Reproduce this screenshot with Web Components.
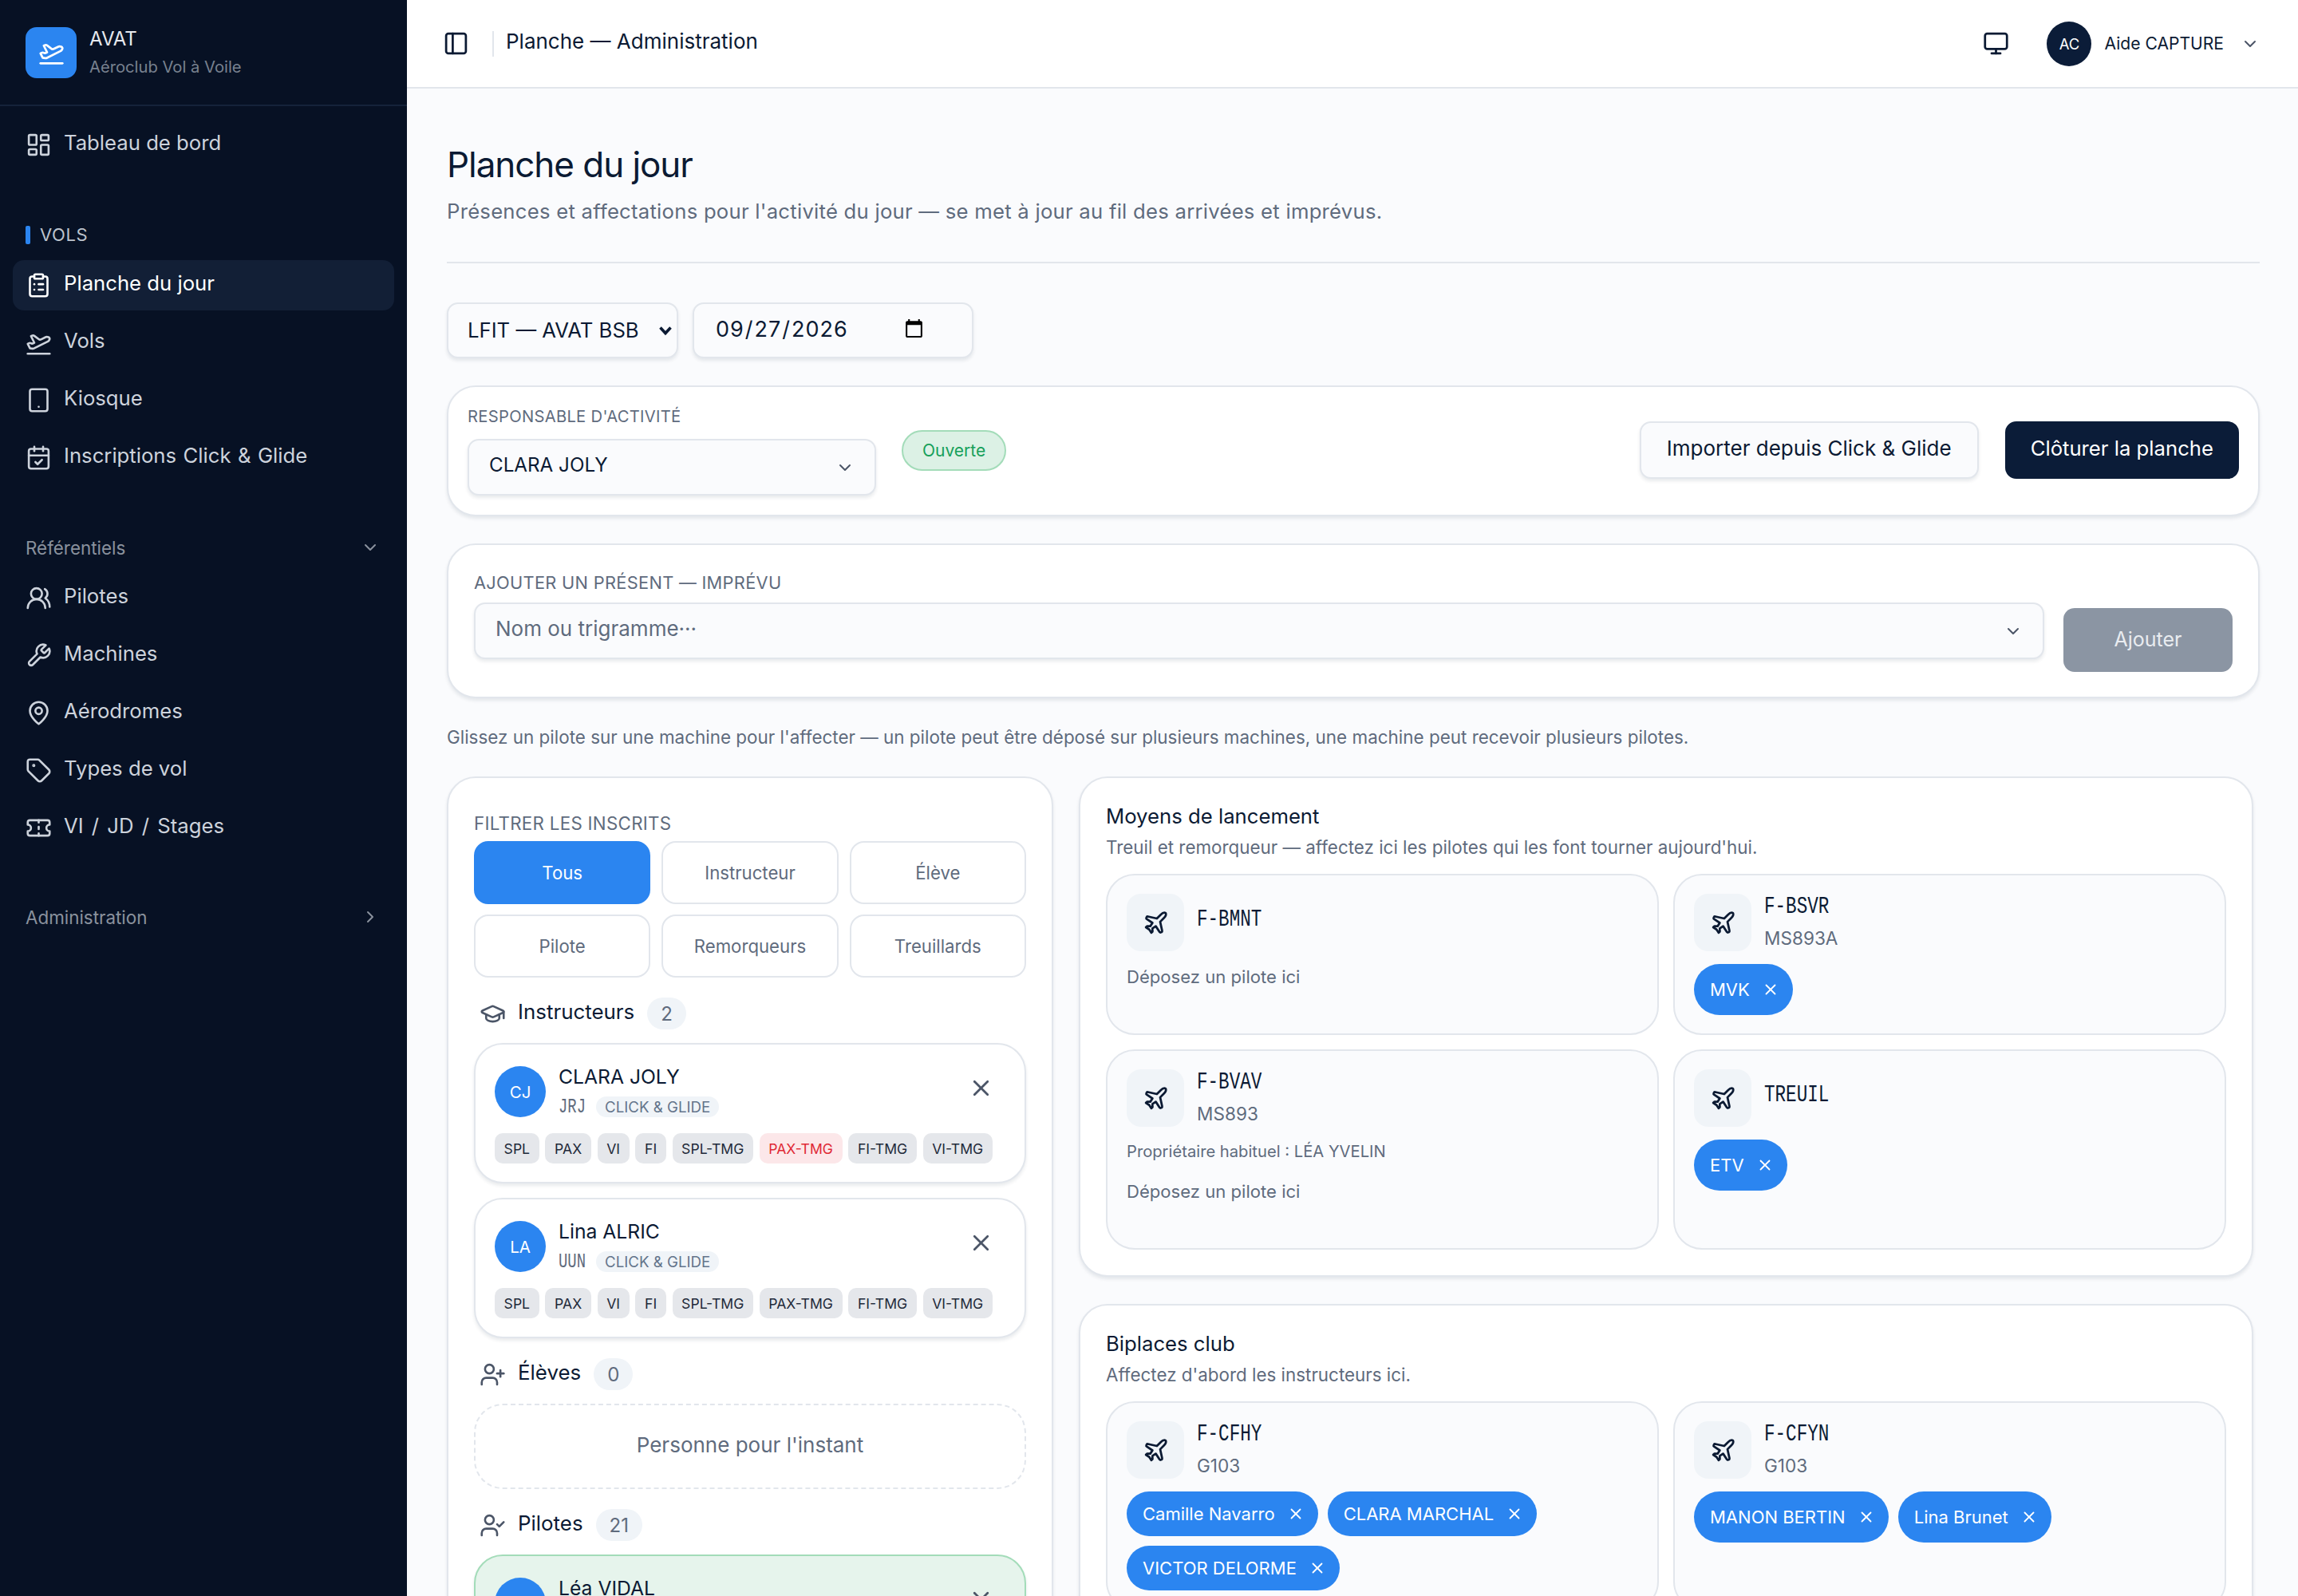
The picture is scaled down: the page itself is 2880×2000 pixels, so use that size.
<!DOCTYPE html>
<html lang="fr">
<head>
<meta charset="utf-8">
<title>AVAT - Planche du jour</title>
<style>
  html, body { margin: 0; height: 2000px; overflow: hidden; }
  body {
    font-family: Inter, "Liberation Sans", sans-serif;
    color: #0b1a33;
    background: #fafbfd;
    --mono: "Liberation Mono", "DejaVu Sans Mono", monospace;
    --blue: #2b85f0;
    --navy: #0b1c38;
    --line: #e2e6ec;
    --muted: #5f6b7d;
    --shadow: 0 3px 4px rgba(15, 30, 60, .09);
  }
  .shell { display: flex; height: 2000px; overflow: hidden; }
  .main { flex: 1; min-width: 0; display: flex; flex-direction: column; }
  .main > * { flex: none; }
  .content { padding: 0 48px 0 50px; display: flex; flex-direction: column; }
  .content > * { flex: none; }
</style>
</head>
<body>
<div class="shell">
  <av-sidebar>
    <av-nav-item icon="dashboard">Tableau de bord</av-nav-item>
    <av-nav-heading>VOLS</av-nav-heading>
    <av-nav-item icon="clipboard" active>Planche du jour</av-nav-item>
    <av-nav-item icon="takeoff">Vols</av-nav-item>
    <av-nav-item icon="tablet">Kiosque</av-nav-item>
    <av-nav-item icon="calendar" style="word-spacing: 1.2px">Inscriptions Click &amp; Glide</av-nav-item>
    <av-nav-fold open>Référentiels</av-nav-fold>
    <av-nav-item icon="users">Pilotes</av-nav-item>
    <av-nav-item icon="wrench">Machines</av-nav-item>
    <av-nav-item icon="pin">Aérodromes</av-nav-item>
    <av-nav-item icon="tag">Types de vol</av-nav-item>
    <av-nav-item icon="ticket" style="word-spacing: 3px">VI / JD / Stages</av-nav-item>
    <av-nav-fold class="last">Administration</av-nav-fold>
  </av-sidebar>

  <div class="main">
    <av-topbar></av-topbar>
    <div class="content">
      <av-page-head></av-page-head>
      <av-filters></av-filters>
      <av-responsable></av-responsable>
      <av-add-present></av-add-present>
      <av-hint>Glissez un pilote sur une machine pour l'affecter — un pilote peut être déposé sur plusieurs machines, une machine peut recevoir plusieurs pilotes.</av-hint>
      <av-board>
        <av-inscrits slot="left">
          <av-section icon="cap" count="2">Instructeurs</av-section>
          <av-pilot initials="CJ" name="CLARA JOLY" tri="JRJ" source="CLICK &amp; GLIDE" warn="PAX-TMG"></av-pilot>
          <av-pilot initials="LA" name="Lina ALRIC" tri="UUN" source="CLICK &amp; GLIDE"></av-pilot>
          <av-section icon="userplus" count="0">Élèves</av-section>
          <av-empty>Personne pour l'instant</av-empty>
          <av-section icon="usercheck" count="21">Pilotes</av-section>
          <av-pilot present initials="LV" name="Léa VIDAL"></av-pilot>
        </av-inscrits>

        <av-fleet title="Moyens de lancement" sub="Treuil et remorqueur — affectez ici les pilotes qui les font tourner aujourd'hui.">
          <av-tile reg="F-BMNT"><av-drop>Déposez un pilote ici</av-drop></av-tile>
          <av-tile reg="F-BSVR" model="MS893A"><av-chip>MVK</av-chip></av-tile>
          <av-tile reg="F-BVAV" model="MS893">
            <av-owner>Propriétaire habituel : LÉA YVELIN</av-owner>
            <av-drop>Déposez un pilote ici</av-drop>
          </av-tile>
          <av-tile reg="TREUIL"><av-chip>ETV</av-chip></av-tile>
        </av-fleet>

        <av-fleet title="Biplaces club" sub="Affectez d'abord les instructeurs ici.">
          <av-tile reg="F-CFHY" model="G103">
            <av-chip compact>Camille Navarro</av-chip>
            <av-chip compact>CLARA MARCHAL</av-chip>
            <av-chip compact>VICTOR DELORME</av-chip>
          </av-tile>
          <av-tile reg="F-CFYN" model="G103">
            <av-chip>MANON BERTIN</av-chip>
            <av-chip>Lina Brunet</av-chip>
          </av-tile>
        </av-fleet>
      </av-board>
    </div>
  </div>
</div>

<script>
// lucide-style icon bodies, all on a 24 unit grid
const ICONS = {
  takeoff: '<path d="M2 22h20"/><path d="M6.36 17.4 4 17l-2-4 1.1-.55a2 2 0 0 1 1.8 0l.17.1a2 2 0 0 0 1.8 0L8 12 5 6l.9-.45a2 2 0 0 1 2.09.2l4.02 3a2 2 0 0 0 2.1.2l4.19-2.06a2.41 2.41 0 0 1 1.73-.17L21 7a1.4 1.4 0 0 1 .87 1.99l-.38.76c-.23.46-.6.84-1.07 1.08L7.58 17.2a2 2 0 0 1-1.22.18Z"/>',
  dashboard: '<rect x="3" y="3" width="7" height="9" rx="1"/><rect x="14" y="3" width="7" height="5" rx="1"/><rect x="14" y="12" width="7" height="9" rx="1"/><rect x="3" y="16" width="7" height="5" rx="1"/>',
  clipboard: '<rect x="8" y="2" width="8" height="4" rx="1"/><path d="M16 4h2a2 2 0 0 1 2 2v14a2 2 0 0 1-2 2H6a2 2 0 0 1-2-2V6a2 2 0 0 1 2-2h2"/><path d="M12 11h4"/><path d="M12 16h4"/><path d="M8 11h.01"/><path d="M8 16h.01"/>',
  tablet: '<rect x="4" y="2" width="16" height="20" rx="2"/><path d="M12 18h.01"/>',
  calendar: '<path d="M8 2v4"/><path d="M16 2v4"/><rect x="3" y="4" width="18" height="18" rx="2"/><path d="M3 10h18"/><path d="m9 16 2 2 4-4"/>',
  users: '<path d="M18 21a8 8 0 0 0-16 0"/><circle cx="10" cy="8" r="5"/><path d="M22 20c0-3.37-2-6.5-4-8a5 5 0 0 0-.45-8.3"/>',
  wrench: '<path d="M14.7 6.3a1 1 0 0 0 0 1.4l1.6 1.6a1 1 0 0 0 1.4 0l3.77-3.77a6 6 0 0 1-7.94 7.94l-6.91 6.91a2.12 2.12 0 0 1-3-3l6.91-6.91a6 6 0 0 1 7.94-7.94l-3.76 3.76z"/>',
  pin: '<path d="M20 10c0 6-8 12-8 12s-8-6-8-12a8 8 0 0 1 16 0Z"/><circle cx="12" cy="10" r="3"/>',
  tag: '<path d="M12.586 2.586A2 2 0 0 0 11.172 2H4a2 2 0 0 0-2 2v7.172a2 2 0 0 0 .586 1.414l8.704 8.704a2.426 2.426 0 0 0 3.42 0l6.58-6.58a2.426 2.426 0 0 0 0-3.42z"/><circle cx="7.5" cy="7.5" r=".5" fill="currentColor"/>',
  ticket: '<path d="M2 9a3 3 0 0 1 0 6v2a2 2 0 0 0 2 2h16a2 2 0 0 0 2-2v-2a3 3 0 0 1 0-6V7a2 2 0 0 0-2-2H4a2 2 0 0 0-2 2Z"/><path d="M12 5v2"/><path d="M12 17v2"/><path d="M12 11v2"/>',
  down: '<path d="m6 9 6 6 6-6"/>',
  right: '<path d="m9 18 6-6-6-6"/>',
  panel: '<rect x="3" y="3" width="18" height="18" rx="2"/><path d="M9 3v18"/>',
  monitor: '<rect x="2" y="3" width="20" height="14" rx="2"/><path d="M8 21h8"/><path d="M12 17v4"/>',
  cap: '<path d="M21.42 10.922a1 1 0 0 0-.019-1.838L12.83 5.18a2 2 0 0 0-1.66 0L2.6 9.08a1 1 0 0 0 0 1.832l8.57 3.908a2 2 0 0 0 1.66 0z"/><path d="M22 10v6"/><path d="M6 12.5V16a6 3 0 0 0 12 0v-3.5"/>',
  userplus: '<path d="M16 21v-2a4 4 0 0 0-4-4H6a4 4 0 0 0-4 4v2"/><circle cx="9" cy="7" r="4"/><path d="M19 8v6"/><path d="M22 11h-6"/>',
  usercheck: '<path d="M16 21v-2a4 4 0 0 0-4-4H6a4 4 0 0 0-4 4v2"/><circle cx="9" cy="7" r="4"/><path d="m16 11 2 2 4-4"/>',
  plane: '<path d="M17.8 19.2 16 11l3.5-3.5C21 6 21.5 4 21 3c-1-.5-3 0-4.5 1.5L13 8 4.8 6.2c-.5-.1-.9.1-1.1.5l-.3.5c-.2.5-.1 1 .3 1.3L9 12l-2 3H4l-1 1 3 2 2 3 1-1v-3l3-2 3.5 5.3c.3.4.8.5 1.3.3l.5-.2c.4-.3.6-.7.5-1.2z"/>',
  x: '<path d="M18 6 6 18"/><path d="m6 6 12 12"/>'
};

const icon = (name, size = 33, stroke = 2) =>
  `<svg width="${size}" height="${size}" viewBox="0 0 24 24" fill="none" stroke="currentColor" stroke-width="${stroke}" stroke-linecap="round" stroke-linejoin="round" style="display:block;flex:none" aria-hidden="true">${ICONS[name]}</svg>`;

/* Everything below just renders a style + markup pair into an open shadow root */
class AvElement extends HTMLElement {
  connectedCallback() {
    if (!this.shadowRoot) this.attachShadow({ mode: 'open' });
    this.shadowRoot.innerHTML = this.render();
  }
  attr(name, fallback = '') {
    return this.getAttribute(name) ?? fallback;
  }
}

const define = (tag, render) => {
  customElements.define(tag, class extends AvElement {
    render() { return render(this); }
  });
};

/* ---------- sidebar ---------- */

define('av-sidebar', () => `
  <style>
    :host { display: block; flex: none; width: 510px; height: 2000px; background: #071124; }
    .brand { display: flex; align-items: center; gap: 16px; height: 133px; padding: 0 32px; box-sizing: border-box;
      border-bottom: 2px solid #15233a; }
    .logo { width: 64px; height: 64px; border-radius: 14px; background: var(--blue); color: #fff;
      display: flex; align-items: center; justify-content: center; flex: none; }
    .name { font-size: 24px; line-height: 36px; color: #e6e9ee; }
    .club { font-size: 20.2px; line-height: 34px; color: #78818f; }
    nav { display: flex; flex-direction: column; padding: 8px 16px 0; }
  </style>
  <div class="brand">
    <div class="logo">${icon('takeoff', 33)}</div>
    <div><div class="name">AVAT</div><div class="club">Aéroclub Vol à Voile</div></div>
  </div>
  <nav><slot></slot></nav>
`);

define('av-nav-item', (el) => `
  <style>
    :host { display: block; height: 63px; margin-top: 9px; border-radius: 14px; color: #cdd3dc;
      ${el.hasAttribute('active') ? 'background: #121f36; color: #fff;' : ''} }
    .row { display: flex; align-items: center; gap: 15px; height: 63px; padding: 0 16px; font-size: 25.7px; }
    .label { position: relative; top: -3px; }
  </style>
  <div class="row">${icon(el.attr('icon'), 33, 1.9)}<span class="label"><slot></slot></span></div>
`);

define('av-nav-heading', () => `
  <style>
    :host { display: flex; align-items: center; gap: 12px; margin: 69px 0 11px 16px; height: 24px; color: #bcc3cd; font-size: 22px; letter-spacing: .6px; }
    i { width: 6px; height: 23px; background: var(--blue); border-radius: 2px; }
  </style>
  <i></i><span><slot></slot></span>
`);

define('av-nav-fold', (el) => `
  <style>
    :host { display: flex; align-items: center; justify-content: space-between; height: 28px; margin: 67px 18px 9px 16px;
      color: #8a919d; font-size: 22.4px; }
    :host(.last) { margin-top: 66px; }
  </style>
  <span><slot></slot></span>${icon(el.hasAttribute('open') ? 'down' : 'right', 24, 2)}
`);

/* ---------- top bar ---------- */

define('av-topbar', () => `
  <style>
    :host { display: flex; align-items: center; height: 111px; box-sizing: border-box; padding: 0 48px 0 45px;
      background: #fff; border-bottom: 2px solid var(--line); }
    .sep { width: 2px; height: 32px; background: var(--line); margin: 0 15px 0 29px; }
    .title { font-size: 26px; position: relative; top: -3px; }
    .grow { flex: 1; }
    .av { width: 56px; height: 56px; border-radius: 50%; background: var(--navy); color: #fff; font-size: 18.5px;
      display: flex; align-items: center; justify-content: center; margin: 0 16px 0 47px; flex: none; }
    .who { font-size: 21.1px; margin-right: 21px; }
    .down { color: #4b5567; }
  </style>
  ${icon('panel', 33)}<span class="sep"></span><span class="title">Planche — Administration</span><span class="grow"></span>
  ${icon('monitor', 33)}<span class="av">AC</span><span class="who">Aide CAPTURE</span><span class="down">${icon('down', 24)}</span>
`);

define('av-page-head', () => `
  <style>
    :host { display: block; box-sizing: border-box; padding-top: 65px; border-bottom: 2px solid var(--line); height: 219px; margin-bottom: 49px; }
    h1 { margin: 0; font-weight: 400; font-size: 44px; letter-spacing: -1.05px; line-height: 60px; color: #0b1a33; }
    p { margin: 11px 0 0; font-size: 25.7px; letter-spacing: .24px; line-height: 36px; color: var(--muted); }
  </style>
  <h1>Planche du jour</h1>
  <p>Présences et affectations pour l'activité du jour — se met à jour au fil des arrivées et imprévus.</p>
`);

/* ---------- filters row ---------- */

const selectArrow = "url(\"data:image/svg+xml,%3Csvg xmlns='http://www.w3.org/2000/svg' width='18' height='14' viewBox='0 0 18 14'%3E%3Cpath d='M2.5 3.5 9 10.5l6.5-7' fill='none' stroke='%230b1a33' stroke-width='3.6'/%3E%3C/svg%3E\")";

define('av-filters', () => `
  <style>
    :host { display: flex; gap: 18px; margin-bottom: 34px; }
    select, input { font: inherit; font-size: 25.7px; color: #0b1a33; background-color: #fafbfd; height: 70px; box-sizing: border-box;
      border: 2px solid var(--line); border-radius: 14px; box-shadow: var(--shadow); outline: none; }
    select { width: 290px; padding: 0 8px 2px 24px; appearance: none; background-image: ${selectArrow};
      background-repeat: no-repeat; background-position: right 5px center; }
    input { width: 352px; padding: 0 57px 3px 26px; font-size: 27px; letter-spacing: 1px; }
  </style>
  <select><option>LFIT — AVAT BSB</option></select>
  <input type="date" value="2026-09-27">
`);

define('av-field-label', () => `
  <style>
    :host { display: block; font-size: 20.2px; line-height: 28px; letter-spacing: .3px; color: var(--muted); }
  </style>
  <slot></slot>
`);

define('av-combo', (el) => `
  <style>
    :host { display: flex; align-items: center; justify-content: space-between; height: 71px; box-sizing: border-box; padding: 0 25px;
      background: #fafbfd; border: 2px solid var(--line); border-radius: 14px; box-shadow: var(--shadow); font-size: 24.2px; }
    span { position: relative; top: -3px; }
    i { color: #4b5567; display: block; }
  </style>
  <span><slot></slot></span><i>${icon('down', 24)}</i>
`);

define('av-responsable', () => `
  <style>
    :host { display: flex; align-items: flex-start; height: 164px; box-sizing: border-box; padding: 23px 24px 0; background: #fff;
      border: 2px solid var(--line); border-radius: 36px; box-shadow: var(--shadow); margin-bottom: 34px; }
    .pick { width: 512px; display: flex; flex-direction: column; gap: 14px; }
    .pill { margin: 31px 0 0 32px; height: 51px; padding: 0 24px; box-sizing: border-box; display: flex; align-items: center;
      border-radius: 26px; background: #dcf1e5; border: 2px solid #a3dcb9; color: #16a05a; font-size: 21px; }
    .grow { flex: 1; }
    .btn { height: 72px; margin-top: 20px; padding: 0 32px 5px; display: flex; align-items: center; box-sizing: border-box; border-radius: 14px; font-size: 26px;
      border: 2px solid var(--line); background: #fafbfd; box-shadow: var(--shadow); }
    .dark { background: var(--navy); border-color: var(--navy); color: #fff; margin-left: 33px; padding: 0 30px 5px; box-shadow: none; font-size: 25.7px; }
  </style>
  <div class="pick">
    <av-field-label>RESPONSABLE D'ACTIVITÉ</av-field-label>
    <av-combo>CLARA JOLY</av-combo>
  </div>
  <span class="pill">Ouverte</span>
  <span class="grow"></span>
  <span class="btn">Importer depuis Click &amp; Glide</span>
  <span class="btn dark">Clôturer la planche</span>
`);

define('av-add-present', () => `
  <style>
    :host { display: flex; gap: 24px; height: 194px; box-sizing: border-box; padding: 33px 32px 0; background: #fff;
      border: 2px solid var(--line); border-radius: 36px; box-shadow: var(--shadow); }
    .pick { flex: 1; display: flex; flex-direction: column; gap: 11px; }
    av-field-label { font-size: 21.8px; }
    av-combo { color: var(--muted); font-size: 26px; }
    .btn { width: 212px; height: 80px; margin-top: 46px; padding-bottom: 3px; box-sizing: border-box; border-radius: 14px; background: #8b95a3; color: #e9ecf0; font-size: 25px;
      display: flex; align-items: center; justify-content: center; }
  </style>
  <div class="pick">
    <av-field-label>AJOUTER UN PRÉSENT — IMPRÉVU</av-field-label>
    <av-combo>Nom ou trigramme···</av-combo>
  </div>
  <span class="btn">Ajouter</span>
`);

define('av-hint', () => `
  <style>
    :host { display: block; font-size: 22.45px; line-height: 32px; color: var(--muted); margin: 33px 0 33px; }
  </style>
  <slot></slot>
`);

/* ---------- board ---------- */

define('av-board', () => `
  <style>
    :host { display: grid; grid-template-columns: 760px 1fr; gap: 32px; padding-right: 8px; align-items: start; }
    .right { display: flex; flex-direction: column; gap: 34px; }
  </style>
  <slot name="left"></slot>
  <div class="right"><slot></slot></div>
`);

define('av-inscrits', () => `
  <style>
    :host { display: block; box-sizing: border-box; height: 1200px; padding: 43px 32px 0; background: #fff; border: 2px solid var(--line);
      border-radius: 36px; box-shadow: var(--shadow); }
    .grid { display: grid; grid-template-columns: 1fr 1fr 1fr; gap: 13px 14px; margin-top: 8px; }
    .f { height: 79px; box-sizing: border-box; display: flex; align-items: center; justify-content: center; border: 2px solid var(--line);
      border-radius: 18px; font-size: 22.2px; color: var(--muted); }
    .on { background: var(--blue); border-color: var(--blue); color: #fff; }
    av-field-label { font-size: 22.3px; }
  </style>
  <av-field-label>FILTRER LES INSCRITS</av-field-label>
  <div class="grid">
    <span class="f on">Tous</span><span class="f">Instructeur</span><span class="f">Élève</span>
    <span class="f">Pilote</span><span class="f">Remorqueurs</span><span class="f">Treuillards</span>
  </div>
  <slot></slot>
`);

define('av-section', (el) => `
  <style>
    /* 25px above wins over the 18px under a card: block margins collapse here */
    :host { display: flex; align-items: center; height: 40px; margin: 25px 0 17px; font-size: 25.9px; color: #0b1a33; }
    .ic { color: #4b5567; margin: 0 15px 0 7px; display: block; }
    .t { position: relative; top: -3px; }
    .n { margin-left: 16px; height: 40px; border-radius: 20px; padding: 0 17px; background: #f0f4f8; color: #5f6b7d;
      font-size: 24px; display: flex; align-items: center; justify-content: center; }
  </style>
  <span class="ic">${icon(el.attr('icon'), 33, 1.9)}</span><span class="t"><slot></slot></span><span class="n">${el.attr('count')}</span>
`);

define('av-pilot', (el) => {
  const tags = ['SPL', 'PAX', 'VI', 'FI', 'SPL-TMG', 'PAX-TMG', 'FI-TMG', 'VI-TMG'];
  const warn = el.attr('warn');
  const tri = el.attr('tri');
  return `
  <style>
    :host { display: block; box-sizing: border-box; height: 176px; padding: 27px 24px 0; margin: 0 0 18px; background: #fff;
      border: 2px solid var(--line); border-radius: 36px; box-shadow: var(--shadow); }
    :host([present]) { background: #e6f4ec; border-color: #a3dcb9; }
    .top { display: flex; gap: 16px; align-items: flex-start; height: 64px; }
    .av { width: 64px; height: 64px; border-radius: 50%; background: var(--blue); color: #fff; font-size: 20.5px;
      display: flex; align-items: center; justify-content: center; flex: none; }
    .who { flex: 1; }
    .name { font-size: 24.7px; line-height: 30px; margin-top: -2px; }
    .sub { display: flex; align-items: center; gap: 13px; margin-top: 10px; height: 26px; }
    .tri { font-family: var(--mono); font-size: 18.9px; color: var(--muted); display: inline-block; transform: scaleY(1.33); }
    .src { height: 26px; padding: 0 11px; border-radius: 13px; background: #f0f4f8; color: #64748b; font-size: 18.7px;
      display: flex; align-items: center; }
    .x { color: #4b5567; margin: 11px 14px 0 0; }
    .tags { display: flex; gap: 7.8px; margin-top: 20px; }
    .tag { height: 38px; padding: 0 11.6px; border-radius: 10px; background: #e5e7eb; color: #1f2a3a; font-size: 17.6px;
      display: flex; align-items: center; white-space: nowrap; }
    .warn { background: #fce7e9; color: #e02935; }
  </style>
  <div class="top">
    <span class="av">${el.attr('initials')}</span>
    <div class="who">
      <div class="name">${el.attr('name')}</div>
      ${tri ? `<div class="sub"><span class="tri">${tri}</span><span class="src">${el.attr('source').replace('&', '&amp;')}</span></div>` : ''}
    </div>
    <span class="x">${icon('x', 33, 2)}</span>
  </div>
  ${tri ? `<div class="tags">${tags.map((t) => `<span class="tag${t === warn ? ' warn' : ''}">${t}</span>`).join('')}</div>` : ''}
`;
});

define('av-empty', () => `
  <style>
    :host { display: flex; align-items: center; justify-content: center; height: 107px; box-sizing: border-box; margin-bottom: 18px; padding-bottom: 5px;
      border: 2px dashed var(--line); border-radius: 36px; color: var(--muted); font-size: 26px; }
  </style>
  <slot></slot>
`);

define('av-fleet', (el) => `
  <style>
    :host { display: block; box-sizing: border-box; padding: 32px; background: #fff; border: 2px solid var(--line); border-radius: 36px;
      box-shadow: var(--shadow); }
    h3 { margin: 0; font-weight: 400; font-size: 25.7px; line-height: 32px; }
    p { margin: 7px 0 0; font-size: 22.4px; line-height: 32px; color: var(--muted); }
    .grid { display: grid; grid-template-columns: 1fr 1fr; gap: 18px; margin-top: 17px; }
  </style>
  <h3>${el.attr('title')}</h3>
  <p>${el.attr('sub')}</p>
  <div class="grid"><slot></slot></div>
`);

define('av-tile', (el) => {
  const model = el.attr('model');
  return `
  <style>
    :host { display: flex; flex-direction: column; box-sizing: border-box; padding: 23px 22px 23px 24px; background: #fafbfd;
      border: 2px solid var(--line); border-radius: 36px; }
    .head { display: flex; gap: 16px; margin-bottom: 16px; }
    .box { width: 72px; height: 72px; border-radius: 18px; background: #f0f4f8; display: flex; align-items: center; justify-content: center; color: #0b1a33; }
    .reg { font-family: var(--mono); font-size: 22.6px; line-height: 32px; transform: scaleY(1.33); }
    .model { font-size: 22.6px; line-height: 32px; margin-top: 8px; color: var(--muted); }
    .single { padding-top: 16px; }
    .body { display: flex; flex-wrap: wrap; gap: 12px; }
  </style>
  <div class="head">
    <span class="box">${icon('plane', 33, 2)}</span>
    <div class="${model ? '' : 'single'}"><div class="reg">${el.attr('reg')}</div>${model ? `<div class="model">${model}</div>` : ''}</div>
  </div>
  <div class="body"><slot></slot></div>
`;
});

define('av-chip', () => `
  <style>
    :host { display: flex; align-items: center; gap: 15px; height: 64px; box-sizing: border-box; padding: 0 17px 0 20px; border-radius: 32px;
      background: var(--blue); color: #fff; font-size: 22px; }
    :host([compact]) { height: 56px; border-radius: 28px; }
  </style>
  <span><slot></slot></span>${icon('x', 22, 2)}
`);

define('av-drop', () => `
  <style>
    :host { display: block; width: 100%; min-height: 64px; font-size: 22.1px; line-height: 32px; color: var(--muted); }
  </style>
  <slot></slot>
`);

define('av-owner', () => `
  <style>
    :host { display: block; width: 100%; font-size: 20.2px; line-height: 30px; color: var(--muted); margin: 0 0 7px; }
  </style>
  <slot></slot>
`);
</script>
</body>
</html>
